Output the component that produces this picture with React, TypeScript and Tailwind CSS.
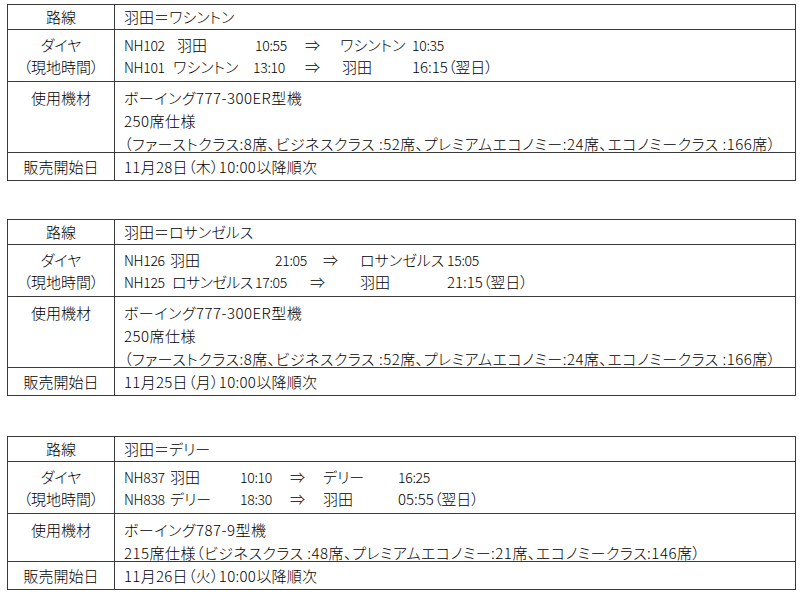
import React from "react";

type Seg = { t: string; w: string; latin?: boolean; extra?: string };

type Route = {
  route: string;
  dia: Seg[][];
  equip: string[];
  equipH: string;
  sales: string;
};

const routes: Route[] = [
  {
    route: "羽田＝ワシントン",
    dia: [
      [
        { t: "NH102", w: "w-[53px]", latin: true },
        { t: "羽田", w: "w-[78px]" },
        { t: "10:55", w: "w-[50px]", latin: true },
        { t: "⇒", w: "w-[35px]" },
        { t: "ワシントン", w: "w-[72px]" },
        { t: "10:35", w: "", latin: true },
      ],
      [
        { t: "NH101", w: "w-[49px]", latin: true },
        { t: "ワシントン", w: "w-[80px]" },
        { t: "13:10", w: "w-[52px]", latin: true },
        { t: "⇒", w: "w-[37px]" },
        { t: "羽田", w: "w-[70px]" },
        { t: "16:15（翌日）", w: "" },
      ],
    ],
    equip: [
      "ボーイング777-300ER型機",
      "250席仕様",
      "（ファーストクラス:8席、ビジネスクラス :52席、プレミアムエコノミー:24席、エコノミークラス :166席）",
    ],
    equipH: "h-[71px]",
    sales: "11月28日（木）10:00以降順次",
  },
  {
    route: "羽田＝ロサンゼルス",
    dia: [
      [
        { t: "NH126", w: "w-[46px]", latin: true },
        { t: "羽田", w: "w-[105px]" },
        { t: "21:05", w: "w-[48px]", latin: true },
        { t: "⇒", w: "w-[37px]" },
        { t: "ロサンゼルス", w: "w-[87px]" },
        { t: "15:05", w: "", latin: true },
      ],
      [
        { t: "NH125", w: "w-[48px]", latin: true },
        { t: "ロサンゼルス", w: "w-[83px]", extra: "tracking-[-0.6px]" },
        { t: "17:05", w: "w-[55px]", latin: true },
        { t: "⇒", w: "w-[50px]" },
        { t: "羽田", w: "w-[87px]" },
        { t: "21:15（翌日）", w: "" },
      ],
    ],
    equip: [
      "ボーイング777-300ER型機",
      "250席仕様",
      "（ファーストクラス:8席、ビジネスクラス :52席、プレミアムエコノミー:24席、エコノミークラス :166席）",
    ],
    equipH: "h-[71px]",
    sales: "11月25日（月）10:00以降順次",
  },
  {
    route: "羽田＝デリー",
    dia: [
      [
        { t: "NH837", w: "w-[46px]", latin: true },
        { t: "羽田", w: "w-[70px]" },
        { t: "10:10", w: "w-[50px]", latin: true },
        { t: "⇒", w: "w-[33px]" },
        { t: "デリー", w: "w-[75px]" },
        { t: "16:25", w: "", latin: true },
      ],
      [
        { t: "NH838", w: "w-[46px]", latin: true },
        { t: "デリー", w: "w-[70px]" },
        { t: "18:30", w: "w-[50px]", latin: true },
        { t: "⇒", w: "w-[33px]" },
        { t: "羽田", w: "w-[75px]" },
        { t: "05:55（翌日）", w: "" },
      ],
    ],
    equip: [
      "ボーイング787-9型機",
      "215席仕様（ビジネスクラス :48席、プレミアムエコノミー:21席、エコノミークラス:146席）",
    ],
    equipH: "h-[48px]",
    sales: "11月26日（火）10:00以降順次",
  },
];

function Table({ r, mt }: { r: Route; mt: string }) {
  return (
    <div className={`w-[789px] border border-[#3a3a3a] ${mt}`}>
      <div className="grid grid-cols-[107px_1fr] h-[24px] leading-[24px]">
        <div className="border-r border-[#3a3a3a] text-center">路線</div>
        <div className="pl-[9px]">{r.route}</div>
      </div>
      <div className="grid grid-cols-[107px_1fr] h-[52px] border-t border-[#3a3a3a] leading-[22px]">
        <div className="border-r border-[#3a3a3a] text-center pt-[4px]">
          <div>ダイヤ</div>
          <div>（現地時間）</div>
        </div>
        <div className="pl-[9px] pt-[4px]">
          {r.dia.map((line, i) => (
            <div key={i} className="flex items-baseline whitespace-nowrap">
              {line.map((s, j) => (
                <span
                  key={j}
                  className={`${s.w} shrink-0 ${s.latin ? "text-[14px] tracking-[-0.3px]" : ""} ${s.extra ?? ""}`}
                >
                  {s.t}
                </span>
              ))}
            </div>
          ))}
        </div>
      </div>
      <div
        className={`grid grid-cols-[107px_1fr] ${r.equipH} border-t border-[#3a3a3a] leading-[23px]`}
      >
        <div className="border-r border-[#3a3a3a] text-center pt-[4px]">使用機材</div>
        <div className="pl-[9px] pt-[4px] whitespace-nowrap tracking-[0.5px]">
          {r.equip.map((e, i) => (
            <div key={i}>{e}</div>
          ))}
        </div>
      </div>
      <div className="grid grid-cols-[107px_1fr] h-[28px] border-t border-[#3a3a3a] leading-[27px]">
        <div className="border-r border-[#3a3a3a] text-center">販売開始日</div>
        <div className="pl-[9px] tracking-[0.3px]">{r.sales}</div>
      </div>
    </div>
  );
}

export default function App() {
  return (
    <div className="w-[800px] h-[594px] bg-white overflow-hidden pt-[4px] pl-[7px] text-black text-[15px] font-light [font-family:'Noto_Sans_CJK_JP','Noto_Sans',sans-serif] [font-feature-settings:'palt']">
      <Table r={routes[0]} mt="" />
      <Table r={routes[1]} mt="mt-[38px]" />
      <Table r={routes[2]} mt="mt-[40px]" />
    </div>
  );
}
